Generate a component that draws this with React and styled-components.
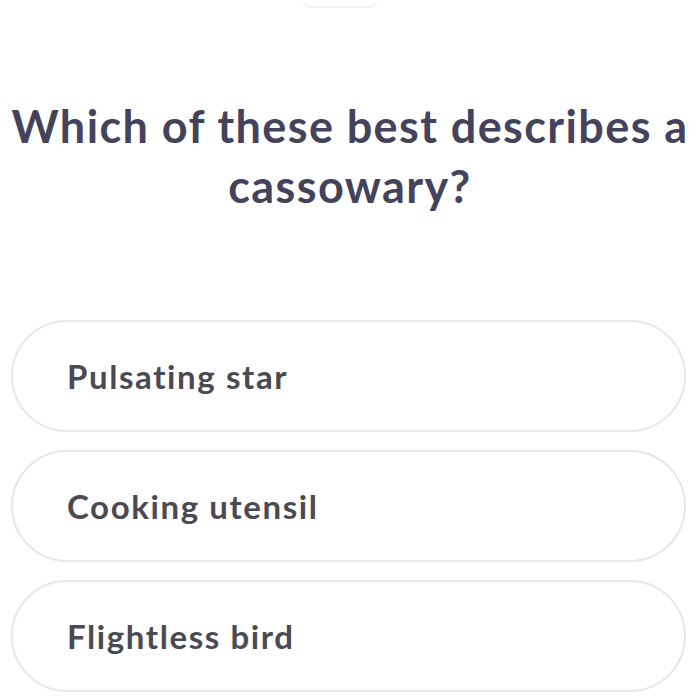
import styled, { createGlobalStyle } from 'styled-components';

const GlobalStyle = createGlobalStyle`
  html, body {
    margin: 0;
    padding: 0;
    background: #ffffff;
  }
`;

const Screen = styled.div`
  width: 700px;
  height: 700px;
  overflow: hidden;
  display: flex;
  flex-direction: column;
  align-items: center;
  font-family: Lato, 'Noto Sans', sans-serif;
  background: #ffffff;
`;

const Header = styled.div`
  width: 100%;
  height: 96px;
  display: flex;
  justify-content: center;
`;

// bottom edge of the picture above, cut off by the screen
const PictureEdge = styled.div`
  width: 74px;
  height: 6px;
  margin-left: -20px;
  border-bottom: 2px solid #f1f1f3;
  border-radius: 0 0 40px 40px;
`;

const Question = styled.h1`
  margin: 0;
  width: 700px;
  text-align: center;
  font-size: 45px;
  line-height: 60px;
  font-weight: 700;
  color: #44435b;
  letter-spacing: 1.4px;
`;

const Options = styled.ul`
  list-style: none;
  margin: 104px 0 0;
  padding: 0 14px 0 11px;
  width: 100%;
  box-sizing: border-box;
  display: flex;
  flex-direction: column;
  gap: 18px;
`;

const Option = styled.li`
  height: 112px;
  box-sizing: border-box;
  border: 2px solid #e7e6ea;
  border-radius: 56px;
  display: flex;
  align-items: center;
  padding-left: 54px;
  font-size: 33px;
  font-weight: 700;
  letter-spacing: 1.6px;
  color: #4b4a53;
`;

const answers = ['Pulsating star', 'Cooking utensil', 'Flightless bird'];

export default function App() {
  return (
    <Screen>
      <GlobalStyle />
      <Header>
        <PictureEdge />
      </Header>
      <Question>Which of these best describes a cassowary?</Question>
      <Options>
        {answers.map(a => (
          <Option key={a}>{a}</Option>
        ))}
      </Options>
    </Screen>
  );
}
